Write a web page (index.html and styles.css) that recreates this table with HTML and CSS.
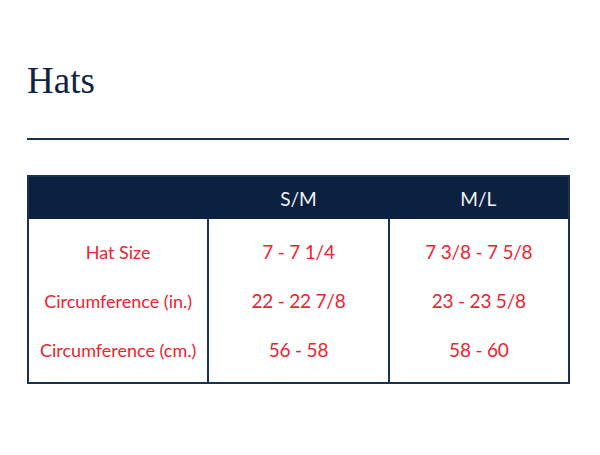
FILE: index.html
```html
<!DOCTYPE html>
<html>
<head>
<meta charset="utf-8">
<link rel="stylesheet" href="styles.css">
</head>
<body>
<div class="page">
  <h1 class="title">Hats</h1>
  <hr class="rule">
  <table class="sizes">
    <thead>
      <tr><th></th><th>S/M</th><th>M/L</th></tr>
    </thead>
    <tbody>
      <tr class="first"><td class="label">Hat Size</td><td>7 - 7 1/4</td><td>7 3/8 - 7 5/8</td></tr>
      <tr><td class="label">Circumference (in.)</td><td>22 - 22 7/8</td><td>23 - 23 5/8</td></tr>
      <tr class="last"><td class="label">Circumference (cm.)</td><td>56 - 58</td><td>58 - 60</td></tr>
    </tbody>
  </table>
</div>
</body>
</html>
```

FILE: styles.css
```css
html, body {
  margin: 0;
  padding: 0;
  background: #fff;
}
.page {
  padding: 59px 31px 0 27px;
}
.title {
  margin: 0;
  font-family: "Liberation Serif", serif;
  font-weight: normal;
  font-size: 37px;
  line-height: 44px;
  color: #0f2444;
}
.rule {
  margin: 35px 0 0 0;
  border: 0;
  height: 2px;
  background: #1c3150;
}
.sizes {
  margin-top: 35px;
  width: 543px;
  border-collapse: collapse;
  table-layout: fixed;
  border: 2px solid #1c3150;
  font-family: Lato, "Open Sans", sans-serif;
}
.sizes th {
  background: #0c2140;
  color: #f2f4f7;
  font-weight: normal;
  font-size: 19px;
  height: 42px;
  padding: 0;
  text-align: center;
  border: 0;
}
.sizes td {
  text-align: center;
  color: #ec2330;
  font-size: 19px;
  letter-spacing: -0.2px;
  height: 49px;
  padding: 0;
  border-left: 2px solid #1c3150;
  border-right: 2px solid #1c3150;
}
.sizes td.label {
  font-size: 18px;
  letter-spacing: 0;
}
.sizes tr.first td {
  padding-top: 8px;
}
.sizes tr.last td {
  padding-bottom: 8px;
}
```
